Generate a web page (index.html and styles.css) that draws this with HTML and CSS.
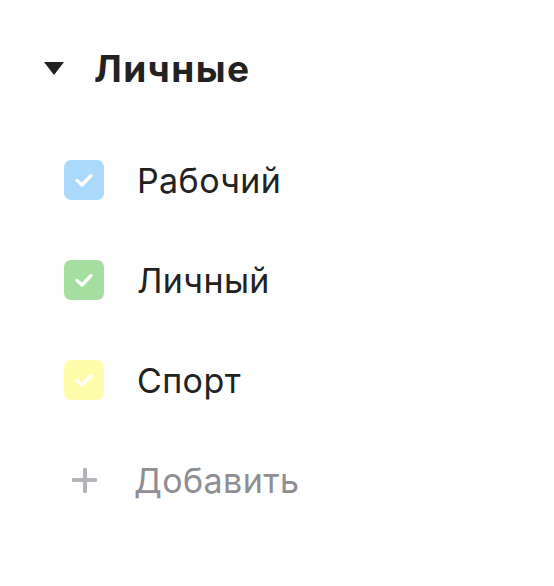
FILE: index.html
```html
<html lang="ru">
<head>
  <meta charset="UTF-8" />
  <meta name="viewport" content="width=device-width, initial-scale=1.0"/>
  <title>Списки</title>
  <link rel="stylesheet" href="styles.css">
</head>
<body>
  <div class="group">
    <div class="group_header">
      <span class="caret"></span>
      <h2>Личные</h2>
    </div>
    <ul class="list">
      <li class="item">
        <span class="check blue">
          <svg viewBox="0 0 20 16" width="20" height="16"><path d="M3 8.5 L8 13 L17 3.5" /></svg>
        </span>
        <span class="label">Рабочий</span>
      </li>
      <li class="item">
        <span class="check green">
          <svg viewBox="0 0 20 16" width="20" height="16"><path d="M3 8.5 L8 13 L17 3.5" /></svg>
        </span>
        <span class="label">Личный</span>
      </li>
      <li class="item">
        <span class="check yellow">
          <svg viewBox="0 0 20 16" width="20" height="16"><path d="M3 8.5 L8 13 L17 3.5" /></svg>
        </span>
        <span class="label">Спорт</span>
      </li>
      <li class="item add">
        <span class="plus"></span>
        <span class="label">Добавить</span>
      </li>
    </ul>
  </div>
</body>
</html>
```
FILE: styles.css
```css
* {
  box-sizing: border-box;
  margin: 0;
  padding: 0;
}

body {
  background: #fff;
  font-family: 'Inter', 'Noto Sans', sans-serif;
  color: #222;
}

.group {
  padding: 48px 0 0 44px;
}

.group_header {
  display: flex;
  align-items: center;
  height: 40px;
}

.caret {
  width: 0;
  height: 0;
  border-left: 10px solid transparent;
  border-right: 10px solid transparent;
  border-top: 13px solid #222;
  margin-right: 30px;
}

.group_header h2 {
  font-size: 37px;
  font-weight: 700;
  letter-spacing: 1.4px;
}

.list {
  list-style: none;
  padding: 72px 0 0 20px;
}

.item {
  display: flex;
  align-items: center;
  height: 40px;
  margin-bottom: 60px;
}

.check {
  width: 40px;
  height: 40px;
  border-radius: 7px;
  display: flex;
  align-items: center;
  justify-content: center;
  margin-right: 33px;
}

.check svg {
  flex: none;
}

.check svg path {
  fill: none;
  stroke: #fff;
  stroke-width: 3.4;
  stroke-linecap: round;
  stroke-linejoin: round;
}

.blue { background: #aad9fb; }
.green { background: #a6dea0; }
.yellow { background: #fdfdaa; }

.label {
  font-size: 34px;
  font-weight: 400;
  letter-spacing: 0.4px;
}

.add .label {
  color: #8e8e93;
}

.plus {
  position: relative;
  width: 40px;
  height: 40px;
  margin-right: 30px;
}

.plus::before,
.plus::after {
  content: '';
  position: absolute;
  background: #b4b4b8;
  border-radius: 1px;
}

.plus::before {
  left: 8px;
  top: 18px;
  width: 25px;
  height: 4px;
}

.plus::after {
  left: 18.5px;
  top: 7.5px;
  width: 4px;
  height: 25px;
}
```
